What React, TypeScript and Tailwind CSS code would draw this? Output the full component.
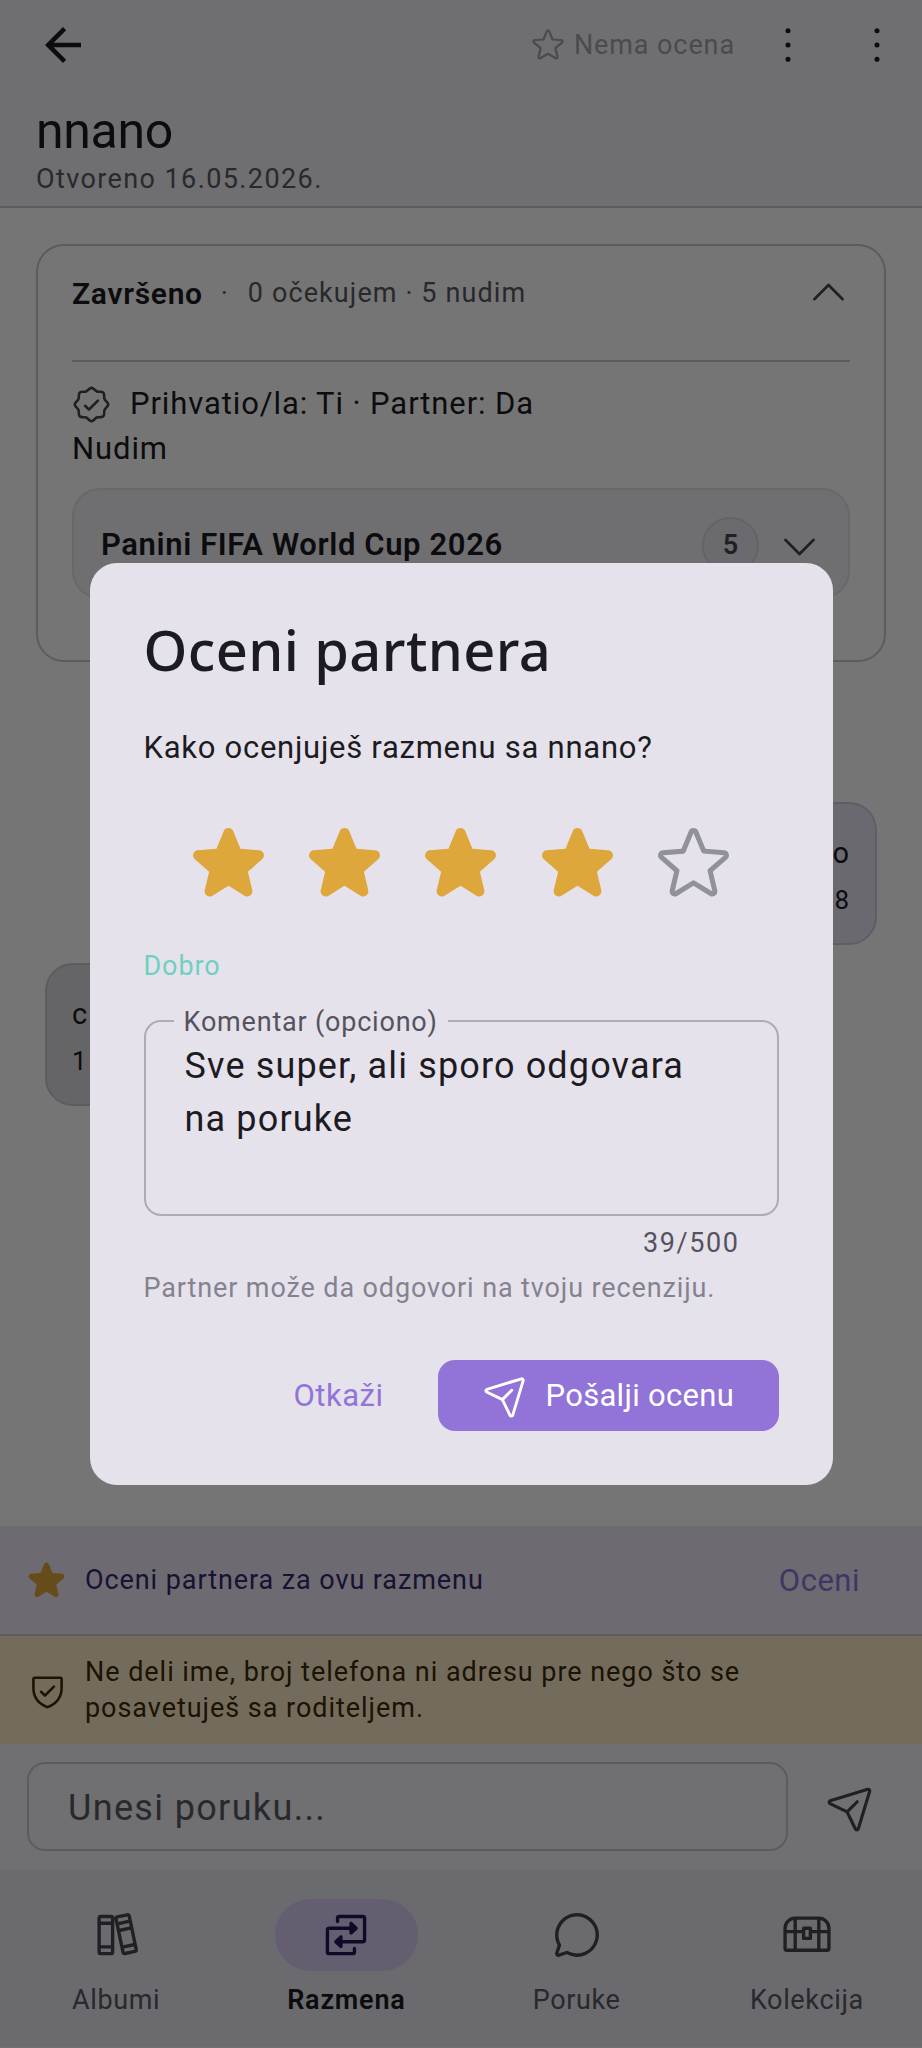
import {
  PiBooks,
  PiCaretDown,
  PiCaretUp,
  PiChatCircle,
  PiDotsThreeVertical,
  PiPaperPlaneTilt,
  PiSealCheck,
  PiShieldCheck,
  PiStar,
  PiStarFill,
  PiTreasureChest,
} from 'react-icons/pi'
import { MdArrowBack } from 'react-icons/md'

function SwapIcon() {
  return (
    <svg viewBox="0 0 256 256" width="1em" height="1em" fill="none" stroke="currentColor" strokeWidth="16" strokeLinecap="round" strokeLinejoin="round">
      <path d="M88 64V48a8 8 0 0 1 8-8h112a8 8 0 0 1 8 8v104a8 8 0 0 1-8 8H104" />
      <path d="M168 192v16a8 8 0 0 1-8 8H48a8 8 0 0 1-8-8V104a8 8 0 0 1 8-8h104" />
      <path d="M152 73v46l24-23zM104 137v46l-24-23z" fill="currentColor" />
    </svg>
  )
}

function Header() {
  return (
    <header className="h-[208px] border-b-2 border-[#c8c8cc] bg-[#f1f1f8]">
      <div className="flex h-[90px] items-center pl-9 pr-[18px] text-[54px] text-[#1b1b1f]">
        <MdArrowBack />
        <div className="ml-auto flex items-center text-[#a3a3a9]">
          <PiStar className="text-[36px]" />
          <span className="ml-[8px] text-[27px] leading-[34px] tracking-[0.9px]">Nema ocena</span>
        </div>
        <PiDotsThreeVertical className="ml-[26px]" />
        <PiDotsThreeVertical className="ml-[35px]" />
      </div>
      <h1 className="mt-[11px] pl-9 text-[50px] leading-[60px] tracking-[-0.3px] text-[#1b1b1f]">nnano</h1>
      <p className="mt-px pl-9 text-[27px] leading-[34px] tracking-[1.4px] text-[#5a5962]">Otvoreno 16.05.2026.</p>
    </header>
  )
}

function TradeCard() {
  return (
    <section className="h-[418px] rounded-[28px] border-2 border-[#c8c8cc] px-[34px] text-[#1b1b1f]">
      <div className="flex h-[95px] items-center">
        <span className="text-[30px] font-semibold tracking-[0.7px]">Završeno</span>
        <span className="ml-[18px] text-[27px] text-[#5a5962]">·</span>
        <span className="ml-[20px] text-[27px] tracking-[1.1px] text-[#5a5962]">0 očekujem · 5 nudim</span>
        <PiCaretUp className="-mr-px ml-auto text-[45px] text-[#45444f]" />
      </div>
      <div className="mt-[19px] h-[2px] bg-[#c8c8cc]" />
      <div className="mt-[20px] flex h-[44px] items-center">
        <PiSealCheck className="-ml-px text-[41px] text-[#45444f]" />
        <span className="ml-[18px] text-[31px] tracking-[0.9px]">Prihvatio/la: Ti · Partner: Da</span>
      </div>
      <p className="text-[31px] leading-[46px] tracking-[0.9px]">Nudim</p>
      <div className="mt-[16px] flex h-[111px] items-center rounded-[28px] border-2 border-[#e3e3e9] bg-[#f1f1f8] pl-[27px] pr-[26px] pt-[3px]">
        <span className="text-[31px] font-semibold tracking-[0.62px]">Panini FIFA World Cup 2026</span>
        <span className="ml-auto flex size-[57px] items-center justify-center rounded-full border-2 border-[#d9d8e1] bg-[#e9e7f2] text-[27px] font-semibold text-[#45444f]">
          5
        </span>
        <PiCaretDown className="ml-[18px] text-[45px] text-[#45444f]" />
      </div>
    </section>
  )
}

function Messages() {
  return (
    <div className="flex flex-col px-[9px] text-[#1b1b1f]">
      <div className="mt-[140px] h-[143px] w-[420px] self-end rounded-[28px] border-2 border-[#cfcbdc] bg-[#e9e4f5] px-[26px] pt-[29px] text-right">
        <p className="text-[29px] leading-[40px]">o</p>
        <p className="mt-[9px] text-[26px] leading-[36px]">8</p>
      </div>
      <div className="mt-[18px] h-[143px] w-[420px] rounded-[28px] border-2 border-[#cacad1] bg-[#dcdce3] px-[25px] pt-[29px]">
        <p className="text-[29px] leading-[40px]">c</p>
        <p className="mt-[9px] text-[26px] leading-[36px]">1</p>
      </div>
    </div>
  )
}

function Notices() {
  return (
    <>
      <div className="flex h-[110px] items-center border-b-2 border-[#c8c8cc] bg-[#ede7f9] pl-[26px] pr-[62px]">
        <PiStarFill className="text-[41px] text-[#dea73b]" />
        <span className="ml-[18px] text-[27px] tracking-[0.92px] text-[#36286f]">Oceni partnera za ovu razmenu</span>
        <span className="ml-auto pt-[2px] text-[31px] tracking-[0.5px] text-[#9273d8]">Oceni</span>
      </div>
      <div className="flex h-[108px] items-center bg-[#fbecca] pl-[27px] text-[#3d2a06]">
        <PiShieldCheck className="text-[41px]" />
        <p className="ml-[17px] pt-px text-[27px] leading-[35.5px] tracking-[0.96px]">
          Ne deli ime, broj telefona ni adresu pre nego što se
          <br />
          posavetuješ sa roditeljem.
        </p>
      </div>
    </>
  )
}

function Composer() {
  return (
    <div className="flex h-[125px] items-start bg-[#f3f3f8] pl-[27px] pt-[18px] text-[#5a5962]">
      <div className="flex h-[89px] w-[761px] items-center rounded-[18px] border-2 border-[#c8c8cc] pl-[39px] pt-[3px] text-[36px] tracking-[1.35px]">
        Unesi poruku...
      </div>
      <PiPaperPlaneTilt className="ml-[38px] mt-[21px] text-[50px] text-[#45444f]" />
    </div>
  )
}

const tabs = [
  { label: 'Albumi', icon: <PiBooks /> },
  { label: 'Razmena', icon: <SwapIcon />, active: true },
  { label: 'Poruke', icon: <PiChatCircle /> },
  { label: 'Kolekcija', icon: <PiTreasureChest /> },
]

function BottomNav() {
  return (
    <nav className="grid h-[179px] grid-cols-4 border-b border-[#f5f5f8] bg-[#e9e6f0] pl-px pt-[30px]">
      {tabs.map((tab) => (
        <div key={tab.label} className="flex flex-col items-center">
          <div
            className={
              tab.active
                ? 'flex h-[72px] w-[143px] items-center justify-center rounded-full bg-[#d9cdf4] text-[54px] text-[#261558]'
                : 'flex h-[72px] w-[143px] items-center justify-center text-[54px] text-[#45444f]'
            }
          >
            {tab.icon}
          </div>
          <span
            className={
              tab.active
                ? 'mt-[12px] text-[27px] font-semibold leading-[34px] tracking-[0.8px] text-[#1b1b1f]'
                : 'mt-[12px] text-[27px] leading-[34px] tracking-[0.65px] text-[#5a5962]'
            }
          >
            {tab.label}
          </span>
        </div>
      ))}
    </nav>
  )
}

function RatingDialog() {
  const rating = 4

  return (
    <div className="h-[922px] w-[743px] rounded-[27px] bg-[#e6e2ec] px-[54px] pt-[51px] text-[#1d1b22]">
      <h2 className="font-['Noto_Sans',sans-serif] text-[56px] font-medium leading-[70px] tracking-[0.4px]">Oceni partnera</h2>
      <p className="mt-[42px] text-[31px] leading-[44px] tracking-[0.73px]">Kako ocenjuješ razmenu sa nnano?</p>
      <div className="mt-[53px] flex justify-center text-[81px]">
        {[1, 2, 3, 4, 5].map((n) => (
          <div key={n} className="flex w-[116.4px] justify-center">
            {n <= rating ? <PiStarFill className="text-[#dea73b]" /> : <PiStar className="text-[#929197]" />}
          </div>
        ))}
      </div>
      <p className="mt-[45px] text-[27px] leading-[34px] tracking-[0.9px] text-[#6fd0c0]">Dobro</p>
      <fieldset className="mt-[21px] h-[212px] rounded-[17px] border-2 border-[#aeabb8]">
        <legend className="ml-[28px] px-[10px] pt-[2px] text-[27px] leading-[32px] tracking-[0.8px] text-[#55525f]">Komentar (opciono)</legend>
        <p className="pl-[39px] pt-[2px] text-[36px] leading-[53px] tracking-[1.15px]">
          Sve super, ali sporo odgovara
          <br />
          na poruke
        </p>
      </fieldset>
      <p className="mt-[10px] pr-[39px] text-right text-[27px] leading-[34px] tracking-[1.6px] text-[#55525f]">39/500</p>
      <p className="mt-[11px] text-[27px] leading-[34px] tracking-[0.88px] text-[#85828f]">Partner može da odgovori na tvoju recenziju.</p>
      <div className="mt-[55px] flex h-[71px] items-center justify-end text-[31px]">
        <button className="pt-[2px] tracking-[0.5px] text-[#9273d8]">Otkaži</button>
        <button className="ml-[54px] flex h-[71px] w-[341px] items-center rounded-[17px] bg-[#9273d8] pl-[45px] pt-px tracking-[0.3px] text-white">
          <PiPaperPlaneTilt className="text-[46px]" />
          <span className="ml-[17px] pt-px">Pošalji ocenu</span>
        </button>
      </div>
    </div>
  )
}

export default function App() {
  return (
    <div className="relative h-[2048px] w-[922px] overflow-hidden bg-white font-[Roboto,sans-serif]">
      <div className="flex h-full flex-col">
        <Header />
        <main className="flex-1 px-9 pt-[36px]">
          <TradeCard />
          <Messages />
        </main>
        <Notices />
        <Composer />
        <BottomNav />
      </div>
      {/* scrim with the dialog on top */}
      <div className="absolute inset-0 flex justify-center bg-black/54 pt-[563px]">
        <RatingDialog />
      </div>
    </div>
  )
}
